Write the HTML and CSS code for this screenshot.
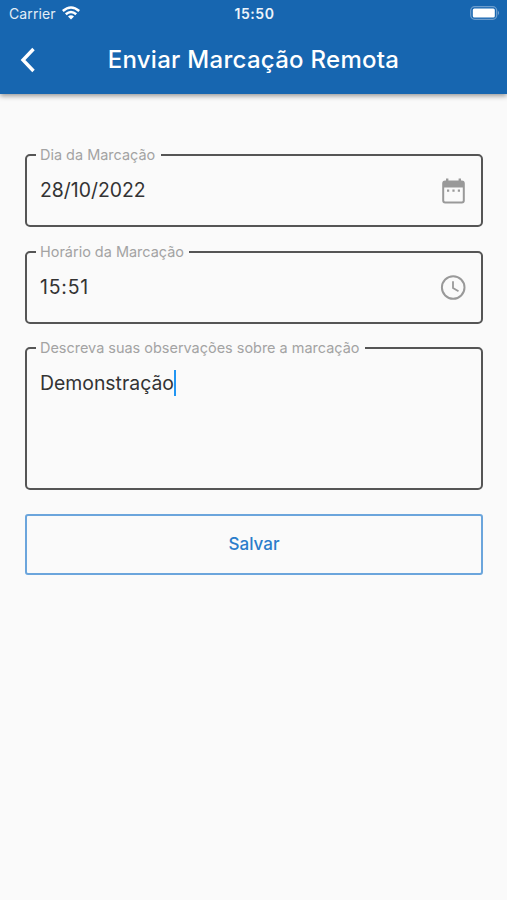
FILE: index.html
```html
<!DOCTYPE html>
<html lang="pt-BR">
<head>
<meta charset="utf-8">
<title>Enviar Marcação Remota</title>
<link rel="stylesheet" href="styles.css">
</head>
<body>
<header class="top">
  <div class="status">
    <div class="carrier"><span class="carrier-name">Carrier</span>
      <svg class="wifi" viewBox="0 0 18 14"><path d="M.8 5Q9-2 17.200 5M3.800 8.300q5.200-4.500 10.400 0" fill="none" stroke="#fff" stroke-width="2.500"/><path d="M6 10.600q3-2.500 6 0L9 13.600z" fill="#fff"/></svg>
    </div>
    <span class="clock">15:50</span>
    <svg class="battery" viewBox="0 0 30 14"><rect x=".7" y=".7" width="26" height="12.600" rx="4" fill="none" stroke="#6c9dcd" stroke-width="1.300"/><rect x="2.800" y="2.500" width="22" height="9" rx="1.500" fill="#fff"/><path d="M28 4.800q2 2.200 0 4.500z" fill="#78a5d1"/></svg>
  </div>
  <div class="bar">
    <svg class="back" viewBox="0 0 16 26"><path d="M13.500 2 3 13l10.500 11" fill="none" stroke="#fff" stroke-width="3.400"/></svg>
    <h1 class="title">Enviar Marcação Remota</h1>
  </div>
</header>
<main class="form">
  <fieldset class="field"><legend>Dia da Marcação</legend>
    <span class="value">28/10/2022</span>
    <svg class="icon" viewBox="0 0 29 29"><rect x="4.200" y="5.500" width="20.600" height="21" rx="2" fill="none" stroke="#999" stroke-width="2"/><path fill="#999" d="M4 5.500h21v6H4zM7 2.500h2.400v4H7zM19.600 2.500H22v4h-2.400zM8 13.600h2.200v2.200H8zM13.400 13.600h2.200v2.200h-2.200zM18.800 13.600H21v2.200h-2.200z"/></svg>
  </fieldset>
  <fieldset class="field"><legend>Horário da Marcação</legend>
    <span class="value time">15:51</span>
    <svg class="icon" viewBox="0 0 29 29"><circle cx="14.200" cy="14.500" r="11.300" fill="none" stroke="#999" stroke-width="2"/><path d="M14 8.200v6.800l5.500 3.300" fill="none" stroke="#999" stroke-width="1.800"/></svg>
  </fieldset>
  <fieldset class="field notes"><legend>Descreva suas observações sobre a marcação</legend>
    <span class="value">Demonstração</span><span class="caret"></span>
  </fieldset>
  <button class="save">Salvar</button>
</main>
</body>
</html>
```

FILE: styles.css
```css
* { box-sizing: border-box; }
body {
  margin: 0;
  min-height: 900px;
  background: #fafafa;
  font-family: Inter, sans-serif;
  color: #333;
}
.top {
  height: 94px;
  background: #1766b0;
  color: #fff;
  box-shadow: 0 2px 5px rgba(0, 0, 0, .4);
}
.status {
  display: grid;
  grid-template-columns: 1fr auto 1fr;
  align-items: center;
  height: 27px;
  padding: 0 7px 0 9px;
  font-size: 14px;
}
.carrier { display: flex; align-items: center; gap: 6px; }
.carrier-name { letter-spacing: .1px; color: #e3edf6; }
.wifi { width: 18px; height: 14px; margin-bottom: 1px; }
.clock { font-weight: 600; letter-spacing: .6px; color: #edf4fa; }
.battery { width: 30px; height: 14px; margin-bottom: 1px; justify-self: end; }
.bar {
  display: grid;
  grid-template-columns: 40px 1fr 40px;
  align-items: center;
  height: 66px;
}
.back { width: 16px; height: 26px; margin-left: 20px; }
.title {
  margin: 0 0 2px;
  text-align: center;
  font-size: 24px;
  font-weight: 500;
  letter-spacing: .28px;
  white-space: nowrap;
}
.form { padding: 53px 24px 0 25px; }
.field {
  display: flex;
  align-items: flex-start;
  justify-content: space-between;
  height: 80px;
  margin: 0 0 16.500px;
  padding: 0 13px 0 9px;
  border: 2px solid #555;
  border-radius: 5px;
}
legend {
  height: 16px;
  padding: 0 5.500px 0 4px;
  font-size: 14.460px;
  line-height: 16px;
  color: #a3a3a3;
  white-space: nowrap;
}
.value {
  padding: 14px 0 0 4px;
  font-size: 19.400px;
  line-height: 26px;
  white-space: nowrap;
}
.time { letter-spacing: .8px; }
.icon { width: 29px; height: 29px; margin-top: 13px; }
.notes { height: 150px; justify-content: flex-start; margin-bottom: 0; }
.caret { width: 2px; height: 26px; margin-top: 14px; background: #2196f3; }
.save {
  display: block;
  width: 100%;
  height: 61px;
  margin-top: 24px;
  border: 2px solid #6ba5dc;
  border-radius: 3px;
  background: transparent;
  color: #2a7dcb;
  font: 500 17px/1 Inter, sans-serif;
}
```
